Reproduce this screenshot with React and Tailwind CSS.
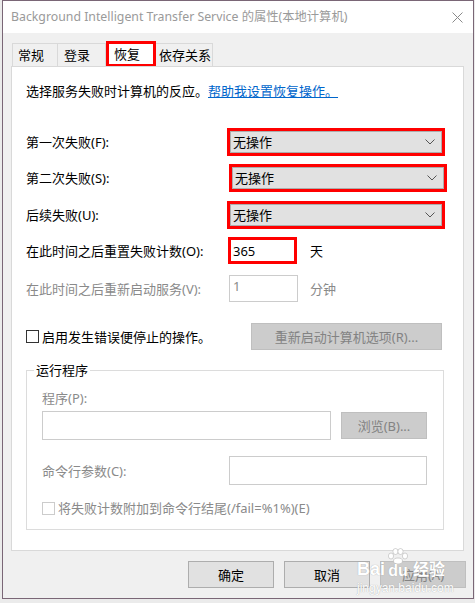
import React from "react";

const font = "font-['Noto_Sans','Noto_Sans_CJK_SC',sans-serif]";

function Combo({ className = "" }) {
  return (
    <div className={`w-[218px] h-[28px] border-[3px] border-[#ff0000] ${className}`}>
      <div className="h-full bg-[#e1e1e1] border border-[#adadad] flex items-center justify-between pl-[2px] pr-[6px] text-black">
        <span>无操作</span>
        <svg width="10" height="6" viewBox="0 0 10 6">
          <path d="M0.5 0.5 L5 5 L9.5 0.5" fill="none" stroke="#555" strokeWidth="1" />
        </svg>
      </div>
    </div>
  );
}

function Btn({ children, disabled, className = "" }) {
  return (
    <div
      className={`h-[27px] flex items-center justify-center border ${
        disabled ? "bg-[#cccccc] border-[#bfbfbf] text-[#838383]" : "bg-[#e1e1e1] border-[#adadad] text-black"
      } ${className}`}
    >
      {children}
    </div>
  );
}

export default function App() {
  return (
    <div className={`w-[475px] h-[603px] bg-[#ebebeb] text-[13px] leading-[18px] ${font}`}>
      <div className="ml-[2px] w-[472px] h-[599px] border border-[#7a6676] bg-[#f0f0f0] flex flex-col relative">
        {/* title bar */}
        <div className="h-[32px] bg-white flex items-center justify-between pl-[8px] pr-[10px]">
          <span className="text-[#9a9a9a] text-[12.3px] whitespace-nowrap">Background Intelligent Transfer Service 的属性(本地计算机)</span>
          <svg width="11" height="11" viewBox="0 0 11 11">
            <path d="M0.5 0.5 L10.5 10.5 M10.5 0.5 L0.5 10.5" stroke="#8a8a8a" strokeWidth="1" />
          </svg>
        </div>

        {/* tabs */}
        <div className="flex items-end ml-[9px] mt-[8px] h-[25px] whitespace-nowrap">
          <div className="h-[23px] w-[46px] border border-b-0 border-[#d9d9d9] bg-[#f0f0f0] pl-[5px] flex items-center">常规</div>
          <div className="h-[23px] w-[48px] border border-l-0 border-b-0 border-[#d9d9d9] bg-[#f0f0f0] pl-[6px] flex items-center">登录</div>
          <div className="h-[25px] w-[50px] border-[3px] border-b-[2px] border-[#ff0000] bg-white pl-[5px] flex items-center">恢复</div>
          <div className="h-[23px] w-[57px] border border-l-0 border-b-0 border-[#d9d9d9] bg-[#f0f0f0] pl-[3px] flex items-center">依存关系</div>
        </div>

        {/* panel */}
        <div className="ml-[8px] w-[453px] h-[485px] border border-[#d9d9d9] bg-white pl-[14px] flex flex-col">
          <div className="mt-[15px] flex">
            <span>选择服务失败时计算机的反应。</span>
            <span className="text-[#0066cc] underline">帮助我设置恢复操作。</span>
          </div>

          <div className="mt-[28px] flex items-center">
            <span className="w-[201px]">第一次失败(F):</span>
            <Combo />
          </div>
          <div className="mt-[8px] flex items-center">
            <span className="w-[201px]">第二次失败(S):</span>
            <Combo className="ml-[2px] w-[215px]" />
          </div>
          <div className="mt-[9px] flex items-center">
            <span className="w-[201px]">后续失败(U):</span>
            <Combo className="w-[216px]" />
          </div>

          <div className="mt-[8px] flex items-center h-[27px]">
            <span className="w-[202px]">在此时间之后重置失败计数(O):</span>
            <div className="w-[69px] h-[27px] border-[3px] border-[#ff0000] pl-[2px] flex items-center text-black">365</div>
            <span className="ml-[13px]">天</span>
          </div>
          <div className="mt-[11px] flex items-center h-[27px] text-[#8a8a8a]">
            <span className="w-[203px]">在此时间之后重新启动服务(V):</span>
            <div className="w-[69px] h-[27px] border border-[#cccccc] pl-[3px] flex items-start pt-[1px]">1</div>
            <span className="ml-[12px]">分钟</span>
          </div>

          <div className="mt-[21px] flex items-center h-[27px]">
            <div className="w-[13px] h-[13px] border border-[#333333] bg-white" />
            <span className="ml-[3px] w-[209px]">启用发生错误便停止的操作。</span>
            <Btn disabled className="w-[191px]">重新启动计算机选项(R)...</Btn>
          </div>

          {/* group box */}
          <div className="mt-[20px] w-[418px] h-[160px] border border-[#dcdcdc] relative pl-[15px] flex flex-col">
            <span className="absolute -top-[10px] left-[7px] bg-white px-[2px] text-black">运行程序</span>
            <span className="mt-[18px] text-[#8a8a8a]">程序(P):</span>
            <div className="mt-[4px] flex items-center">
              <div className="w-[289px] h-[29px] border border-[#cccccc]" />
              <Btn disabled className="ml-[10px] w-[86px]">浏览(B)...</Btn>
            </div>
            <div className="mt-[16px] flex items-center">
              <span className="w-[187px] text-[#8a8a8a]">命令行参数(C):</span>
              <div className="w-[198px] h-[29px] border border-[#cccccc]" />
            </div>
            <div className="mt-[14px] flex items-center text-[#8a8a8a]">
              <div className="w-[13px] h-[13px] border border-[#cccccc] bg-white" />
              <span className="ml-[3px]">将失败计数附加到命令行结尾(/fail=%1%)(E)</span>
            </div>
          </div>
        </div>

        {/* buttons */}
        <div className="mt-[10px] flex justify-end gap-[10px] pr-[7px]">
          <Btn className="w-[86px]">确定</Btn>
          <Btn className="w-[86px]">取消</Btn>
          <Btn disabled className="w-[86px]">应用(A)</Btn>
        </div>

        {/* watermark */}
        <div className="absolute left-[354px] top-[545px] w-[96px] flex flex-col pointer-events-none text-white [text-shadow:0_0_1px_#9a9a9a]">
          <div className="flex items-end h-[33px]">
            <span className="text-[18px] leading-[20px] font-bold font-['Liberation_Sans',sans-serif]">Bai</span>
            <div className="flex flex-col items-center w-[26px]">
              <svg width="22" height="16" viewBox="0 0 22 16">
                <g fill="#ffffff" stroke="#b5b5b5" strokeWidth="0.6">
                  <ellipse cx="4" cy="8" rx="2.6" ry="3" />
                  <ellipse cx="8.5" cy="3.5" rx="2.6" ry="3" />
                  <ellipse cx="13.5" cy="3.5" rx="2.6" ry="3" />
                  <ellipse cx="18" cy="8" rx="2.6" ry="3" />
                  <ellipse cx="11" cy="13" rx="4.5" ry="3" />
                </g>
              </svg>
              <span className="text-[16px] leading-[16px] -mt-[1px] font-bold font-['Liberation_Sans',sans-serif]">du</span>
            </div>
            <span className="ml-[2px] text-[16px] leading-[20px] font-bold">经验</span>
          </div>
          <span className="mt-[3px] text-[12px] leading-[13px] font-['Liberation_Sans',sans-serif]">jingyan.baidu.com</span>
        </div>
      </div>
    </div>
  );
}
